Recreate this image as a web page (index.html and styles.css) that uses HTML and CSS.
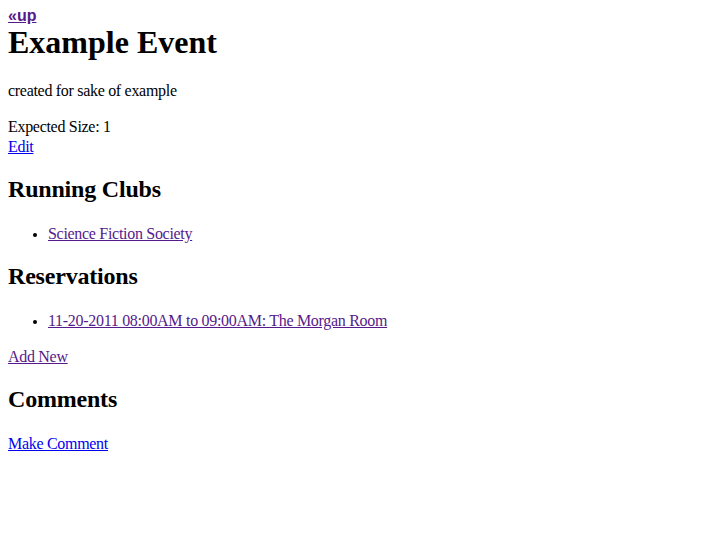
FILE: index.html
```html
<!DOCTYPE html>
<html>
<head>
<meta charset="utf-8">
<link rel="stylesheet" href="styles.css">
</head>
<body>
<div class="up"><a class="visited" href="#">«up</a></div>
<h1 class="title">Example Event</h1>
<p class="desc">created for sake of example</p>
<div class="size">Expected Size: 1</div>
<div class="edit"><a href="#">Edit</a></div>
<h2 class="section">Running Clubs</h2>
<ul class="list">
<li><a class="visited" href="#">Science Fiction Society</a></li>
</ul>
<h2 class="section">Reservations</h2>
<ul class="list">
<li><a class="visited" href="#">11-20-2011 08:00AM to 09:00AM: The Morgan Room</a></li>
</ul>
<p class="action"><a class="visited" href="#">Add New</a></p>
<h2 class="section">Comments</h2>
<p class="action"><a href="#">Make Comment</a></p>
</body>
</html>
```
FILE: styles.css
```css
body {
  margin: 8px;
  font-family: "Liberation Serif", "Times New Roman", serif;
  font-size: 16px;
  line-height: 20px;
  letter-spacing: -0.3px;
  color: #000;
  background: #fff;
}
a { color: #0000ee; }
a.visited { color: #551a8b; }
.up {
  font-family: "Liberation Sans", Arial, sans-serif;
  font-weight: bold;
  font-size: 16px;
  line-height: 16px;
  letter-spacing: 0;
}
.title {
  font-size: 32px;
  line-height: 36px;
  letter-spacing: 0;
  margin: 0;
}
.desc { margin: 21px 0 16px; }
.size, .edit { margin: 0; }
.section {
  font-size: 24px;
  line-height: 28px;
  letter-spacing: -0.2px;
  margin: 18px 0 21px;
}
.list { margin: 16px 0; padding-left: 40px; }
.list li::marker { font-size: 14px; }
.action { margin: 16px 0; }
```
